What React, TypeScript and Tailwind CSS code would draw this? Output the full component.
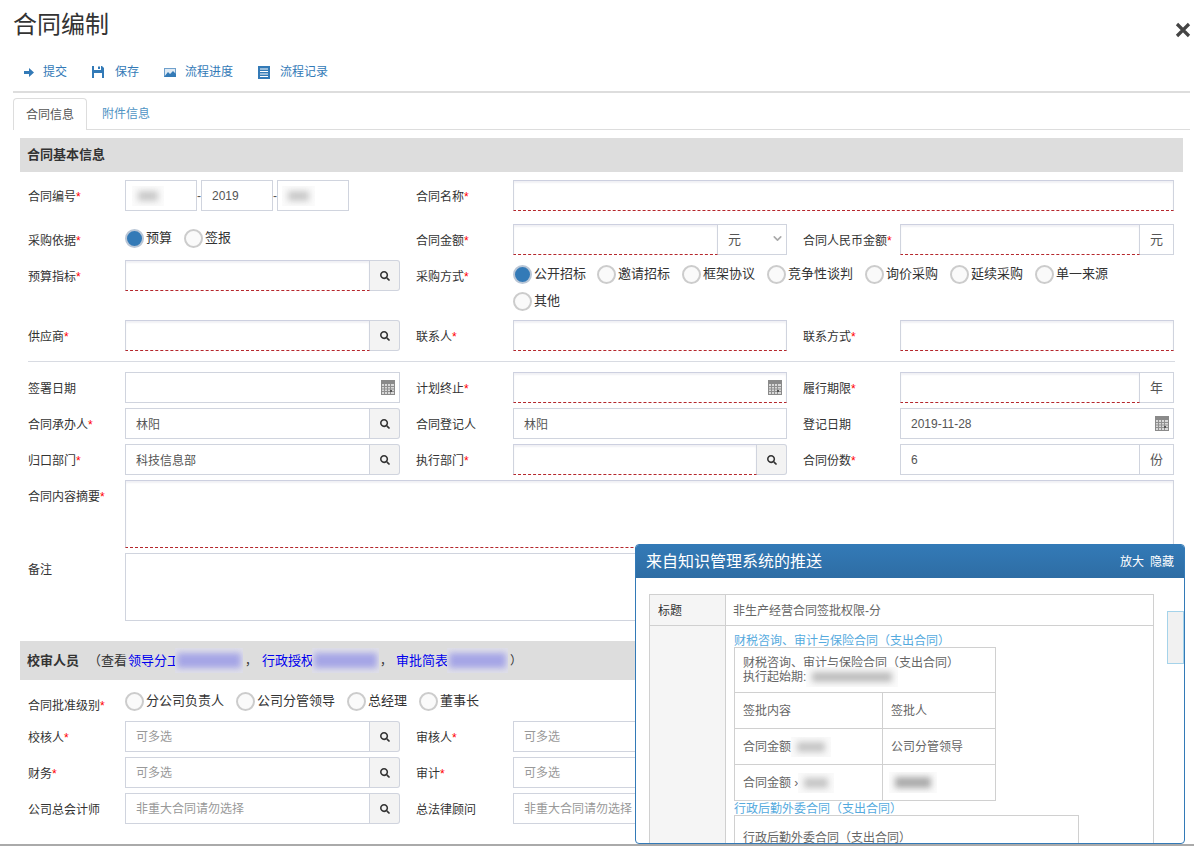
import type { ReactNode } from "react";
import { FaSearch } from "react-icons/fa";
import { ChevronDown } from "lucide-react";

const inputBase =
  "h-full min-w-0 flex-1 border border-[#d0d4de] bg-white px-[10px] text-[12px] text-[#555] outline-none placeholder:text-[#999]";
const requiredInput =
  "border-t-[#cdd0e0] border-b-[#b5272c] [border-bottom-style:dashed] shadow-[inset_0_2px_2px_rgba(60,60,110,0.07)]";

const Blur = ({ w, h, color, bg, pad = 12 }: { w: number; h: number; color: string; bg: string; pad?: number }) => (
  <span
    className="inline-flex shrink-0 items-center justify-center overflow-hidden align-middle"
    style={{ width: w, height: h + 10, background: bg }}
  >
    <span className="blur-[3px]" style={{ width: w - pad, height: h, background: color }} />
  </span>
);

const Label = ({ text, required }: { text: string; required?: boolean }) => (
  <div className="w-[97px] shrink-0 text-[12px] leading-[35px] text-[#333]">
    {text}
    {required && <span className="text-[#f00]">*</span>}
  </div>
);

const Field = ({
  label,
  required,
  wide,
  children,
}: {
  label: string;
  required?: boolean;
  wide?: boolean;
  children: ReactNode;
}) => (
  <div className="flex h-full shrink-0">
    <Label text={label} required={required} />
    <div className={wide ? "flex h-full w-[275px]" : "flex h-full w-[274px]"}>{children}</div>
  </div>
);

const SearchBtn = () => (
  <div className="flex h-full w-[30px] shrink-0 items-center justify-center rounded-r-[3px] border border-l-0 border-[#d0d4de] bg-[#f3f3f3] text-[#333]">
    <FaSearch size={10} />
  </div>
);

const Lookup = ({
  value,
  required,
  placeholder,
}: {
  value?: string;
  required?: boolean;
  placeholder?: string;
}) => (
  <>
    <input
      readOnly
      value={value ?? ""}
      placeholder={placeholder}
      className={`${inputBase} ${required ? requiredInput : ""}`}
    />
    <SearchBtn />
  </>
);

const Plain = ({ required, value }: { required?: boolean; value?: string }) => (
  <input readOnly value={value ?? ""} className={`${inputBase} ${required ? requiredInput : ""}`} />
);

const Addon = ({ text }: { text: string }) => (
  <div className="flex h-full w-[34px] shrink-0 items-center justify-center border border-l-0 border-[#d0d4de] bg-white text-[13px] text-[#555]">
    {text}
  </div>
);

const CalendarIcon = () => (
  <svg width="14" height="15" viewBox="0 0 14 15" className="shrink-0">
    <rect width="14" height="15" fill="#8a8a8a" />
    <rect x="1" y="4" width="12" height="10" fill="#d8d8d8" />
    <path d="M3.5 4v10M6.5 4v10M9.5 4v10M1 6.5h12M1 9h12M1 11.5h12" stroke="#8f8f8f" strokeWidth="1" />
    <rect x="9" y="10" width="2" height="2" fill="#555" />
  </svg>
);

const DateInput = ({ required, value }: { required?: boolean; value?: string }) => (
  <div className="relative flex h-full flex-1">
    <input readOnly value={value ?? ""} className={`${inputBase} ${required ? requiredInput : ""}`} />
    <div className="absolute right-[5px] top-[8px]">
      <CalendarIcon />
    </div>
  </div>
);

const Radio = ({ text, checked }: { text: string; checked?: boolean }) => (
  <div className="flex h-[20px] items-center gap-[2px] text-[13px] text-[#333]">
    <span
      className={
        checked
          ? "h-[19px] w-[19px] rounded-full border-2 border-[#b9c6d6] bg-[#337ab7]"
          : "h-[19px] w-[19px] rounded-full border-2 border-[#ccc] bg-[#fafafa]"
      }
    />
    <span>{text}</span>
  </div>
);

const Toolbar = () => (
  <div className="mt-[20px] flex h-[20px] items-center gap-[25px] pl-[24px] text-[12px] text-[#337ab7]">
    <div className="flex items-center gap-[9px]">
      <svg width="10" height="9" viewBox="0 0 10 9" fill="#337ab7">
        <path d="M0 3h5V0l5 4.5L5 9V6H0z" />
      </svg>
      提交
    </div>
    <div className="flex items-center gap-[11px]">
      <svg width="12" height="12" viewBox="0 0 12 12" fill="#337ab7">
        <path d="M0 0h2v4h7V0h1l2 2v10h-2V7H2v5H0zM6 .5h2V3H6z" />
      </svg>
      保存
    </div>
    <div className="flex items-center gap-[9px]">
      <svg width="12" height="9" viewBox="0 0 12 9">
        <rect width="12" height="9" fill="#6fa0cc" />
        <rect x="1" y="1" width="10" height="7" fill="#dfeaf4" />
        <path d="M0 9l4-5 2 2 3-3 3 3v3z" fill="#337ab7" />
      </svg>
      流程进度
    </div>
    <div className="flex items-center gap-[10px]">
      <svg width="12" height="13" viewBox="0 0 12 13">
        <rect width="12" height="13" fill="#337ab7" />
        <path d="M2 3h8M2 5.5h8M2 8h8M2 10.5h8" stroke="#fff" strokeWidth="1" />
      </svg>
      流程记录
    </div>
  </div>
);

const SectionBar = ({ children, height }: { children: ReactNode; height: string }) => (
  <div className={`-ml-[8px] -mr-[9px] flex items-center bg-[#dddddd] pl-[7px] text-[13px] text-[#333] ${height}`}>
    {children}
  </div>
);

const Link = ({ text, blurW, overlap }: { text: string; blurW: number; overlap: string }) => (
  <span className="inline-flex shrink-0 items-center text-[13px] text-[#0000ee]">
    {text}
    <span className={overlap}>
      <Blur w={blurW} h={15} color="#a5a5e6" bg="#e0e0e8" pad={4} />
    </span>
  </span>
);

const PushPanel = () => (
  <div className="absolute left-[635px] top-[544px] h-[300px] w-[550px] overflow-hidden rounded-[4px] border border-[#337ab7] bg-white">
    <div className="flex h-[33px] items-center justify-between bg-gradient-to-b from-[#337ab7] to-[#2e6da4] pl-[10px] pr-[10px] text-white">
      <span className="text-[16px]">来自知识管理系统的推送</span>
      <div className="flex gap-[6px] text-[12px]">
        <span>放大</span>
        <span>隐藏</span>
      </div>
    </div>
    <div className="ml-[13px] mt-[16px] h-[300px] w-[505px] border border-[#d0d0d0] text-[12px] text-[#666]">
      <div className="flex h-[31px] border-b border-[#d0d0d0]">
        <div className="flex w-[76px] items-center border-r border-[#d0d0d0] bg-[#f5f5f5] pl-[8px] pt-[2px] text-[#333]">
          标题
        </div>
        <div className="flex items-center pl-[7px] pt-[2px]">非生产经营合同签批权限-分</div>
      </div>
      <div className="flex h-[260px]">
        <div className="w-[76px] border-r border-[#d0d0d0] bg-[#f5f5f5]" />
        <div className="pl-[8px]">
          <div className="flex h-[21px] items-end leading-[11px] text-[#55aade]">财税咨询、审计与保险合同（支出合同）</div>
          <div className="w-[262px] border border-[#d0d0d0]">
            <div className="flex h-[45px] flex-col justify-center border-b border-[#d0d0d0] pl-[8px] leading-[14px]">
              <div>财税咨询、审计与保险合同（支出合同）</div>
              <div className="flex h-[14px] items-center">
                执行起始期:
                <Blur w={92} h={10} color="#bdbdbd" bg="#fbfbfb" />
              </div>
            </div>
            <div className="flex h-[36px] border-b border-[#d0d0d0]">
              <div className="flex w-[148px] items-center border-r border-[#d0d0d0] pl-[8px]">签批内容</div>
              <div className="flex items-center pl-[8px]">签批人</div>
            </div>
            <div className="flex h-[36px] border-b border-[#d0d0d0]">
              <div className="flex w-[148px] items-center border-r border-[#d0d0d0] pl-[8px]">
                合同金额
                <Blur w={40} h={10} color="#c4c4c4" bg="#fafafa" />
              </div>
              <div className="flex items-center pl-[8px]">公司分管领导</div>
            </div>
            <div className="flex h-[35px]">
              <div className="flex w-[148px] items-center border-r border-[#d0d0d0] pl-[8px]">
                合同金额 ›
                <Blur w={36} h={10} color="#c4c4c4" bg="#fafafa" />
              </div>
              <div className="flex items-center pl-[6px]">
                <Blur w={48} h={11} color="#aaaaaa" bg="#fbfbfb" />
              </div>
            </div>
          </div>
          <div className="flex h-[14px] items-center pt-px text-[#55aade]">行政后勤外委合同（支出合同）</div>
          <div className="w-[345px] border border-[#d0d0d0] pl-[8px] pt-[13px]">行政后勤外委合同（支出合同）</div>
        </div>
      </div>
    </div>
    <div className="absolute right-0 top-[66px] h-[53px] w-[17px] border border-[#a5d3ea] bg-[#f1f1f1]" />
  </div>
);

const App = () => {
  return (
    <div className="relative h-[846px] w-full overflow-hidden border-b-2 border-[#aaa] bg-white font-['Liberation_Sans','Noto_Sans_CJK_SC',sans-serif]">
      <div className="flex h-[42px] justify-between px-[13px] pt-[9px]">
        <h1 className="text-[24px] font-normal leading-[32px] text-[#333]">合同编制</h1>
        <svg width="18" height="18" viewBox="0 0 18 18" className="-mr-[11px] mt-[12px]">
          <path d="M3 3l12 12M15 3L3 15" stroke="#444" strokeWidth="3.2" />
        </svg>
      </div>
      <Toolbar />
      <div className="mx-[13px] mt-[9px] w-[1177px] border-t-2 border-[#dddddd]" />

      {/* tabs */}
      <div className="mx-[13px] mt-[5px] flex h-[32px] w-[1177px] border-b border-[#dddddd] text-[12px]">
        <div className="flex h-[32px] w-[74px] items-center justify-center rounded-t-[4px] border border-b-0 border-[#dddddd] bg-white text-[#555]">
          合同信息
        </div>
        <div className="flex items-center pl-[15px] text-[#4f94c4]">附件信息</div>
      </div>

      <div className="mt-[8px] pl-[28px] pr-[20px]">
        <SectionBar height="h-[34px]">
          <span className="font-bold">合同基本信息</span>
        </SectionBar>

        {/* 编号 / 名称 */}
        <div className="mt-[8px] flex h-[31px]">
          <div className="flex w-[388px] shrink-0">
            <Label text="合同编号" required />
            <div className="flex h-full items-center text-[12px] text-[#555]">
              <div className="flex h-full w-[72px] items-center overflow-hidden border border-[#d0d4de] pl-[6px]">
                <Blur w={32} h={10} color="#c8c8c8" bg="#fbfbfb" />
              </div>
              <span className="w-[4px] text-center">-</span>
              <div className="flex h-full w-[72px] items-center border border-[#d0d4de] pl-[10px]">2019</div>
              <span className="w-[4px] text-center">-</span>
              <div className="flex h-full w-[72px] items-center overflow-hidden border border-[#d0d4de] pl-[4px]">
                <Blur w={33} h={10} color="#c8c8c8" bg="#fbfbfb" />
              </div>
            </div>
          </div>
          <Label text="合同名称" required />
          <div className="flex h-full w-[661px]">
            <Plain required />
          </div>
        </div>

        {/* 依据 / 金额 */}
        <div className="mt-[13px] flex h-[31px] gap-[16px]">
          <div className="flex w-[372px] shrink-0">
            <Label text="采购依据" required />
            <div className="flex gap-[12px] pt-[4px]">
              <Radio text="预算" checked />
              <Radio text="签报" />
            </div>
          </div>
          <Field label="合同金额" required>
            <Plain required />
            <div className="relative h-full w-[69px] shrink-0">
              <select className="h-full w-full appearance-none border border-l-0 border-[#d0d4de] bg-white pl-[10px] text-[13px] text-[#555]">
                <option>元</option>
              </select>
              <ChevronDown size={13} strokeWidth={3} className="absolute right-[3px] top-[8px] text-[#aaa]" />
            </div>
          </Field>
          <Field label="合同人民币金额" required>
            <Plain required />
            <Addon text="元" />
          </Field>
        </div>

        {/* 指标 / 方式 */}
        <div className="mt-[5px] flex h-[50px] gap-[16px]">
          <div className="h-[31px] shrink-0">
            <Field label="预算指标" required wide>
              <Lookup required />
            </Field>
          </div>
          <div className="flex">
            <Label text="采购方式" required />
            <div className="w-[661px] pt-[4px]">
              <div className="flex gap-x-[12px]">
                <div className="-mr-px">
                  <Radio text="公开招标" checked />
                </div>
                <Radio text="邀请招标" />
                <Radio text="框架协议" />
                <Radio text="竞争性谈判" />
                <Radio text="询价采购" />
                <Radio text="延续采购" />
                <Radio text="单一来源" />
              </div>
              <div className="mt-[7px] flex">
                <Radio text="其他" />
              </div>
            </div>
          </div>
        </div>

        {/* 供应商 */}
        <div className="mt-[10px] flex h-[31px] gap-[16px]">
          <Field label="供应商" required wide>
            <Lookup required />
          </Field>
          <Field label="联系人" required>
            <Plain required />
          </Field>
          <Field label="联系方式" required>
            <Plain required />
          </Field>
        </div>

        <div className="mt-[10px] h-px w-[1147px] bg-[#d8dbe2]" />

        <div className="mt-[10px] flex h-[31px] gap-[16px]">
          <Field label="签署日期" wide>
            <DateInput />
          </Field>
          <Field label="计划终止" required>
            <DateInput required />
          </Field>
          <Field label="履行期限" required>
            <Plain required />
            <Addon text="年" />
          </Field>
        </div>

        <div className="mt-[5px] flex h-[31px] gap-[16px]">
          <Field label="合同承办人" required wide>
            <Lookup value="林阳" />
          </Field>
          <Field label="合同登记人">
            <Plain value="林阳" />
          </Field>
          <Field label="登记日期">
            <DateInput value="2019-11-28" />
          </Field>
        </div>

        <div className="mt-[5px] flex h-[31px] gap-[16px]">
          <Field label="归口部门" required wide>
            <Lookup value="科技信息部" />
          </Field>
          <Field label="执行部门" required>
            <Lookup required />
          </Field>
          <Field label="合同份数" required>
            <Plain value="6" />
            <Addon text="份" />
          </Field>
        </div>

        <div className="mt-[5px] flex h-[68px]">
          <Label text="合同内容摘要" required />
          <div className={`h-full w-[1049px] border border-[#d0d4de] ${requiredInput}`} />
        </div>
        <div className="mt-[5px] flex h-[68px]">
          <Label text="备注" />
          <div className="h-full w-[1049px] border border-[#d0d4de]" />
        </div>

        <div className="mt-[20px]">
          <SectionBar height="h-[39px]">
            <span className="w-[61px] shrink-0 font-bold">校审人员</span>
            <span className="w-[40px] shrink-0 whitespace-nowrap">（查看</span>
            <Link text="领导分工" blurW={68} overlap="-ml-[5px]" />
            <span className="w-[19px] shrink-0 pl-[2px] text-[12px]">，</span>
            <Link text="行政授权" blurW={67} overlap="-ml-[2px]" />
            <span className="w-[17px] shrink-0 pl-[1px] text-[12px]">，</span>
            <Link text="审批简表" blurW={61} overlap="-ml-[1px]" />
            <span className="pl-[2px] text-[12px]">）</span>
          </SectionBar>
        </div>

        <div className="mt-[9px] flex h-[31px]">
          <Label text="合同批准级别" required />
          <div className="flex gap-[12px] pt-[2px]">
            <Radio text="分公司负责人" />
            <Radio text="公司分管领导" />
            <Radio text="总经理" />
            <Radio text="董事长" />
          </div>
        </div>

        <div className="mt-px flex h-[31px] gap-[16px]">
          <Field label="校核人" required wide>
            <Lookup placeholder="可多选" />
          </Field>
          <Field label="审核人" required>
            <Lookup placeholder="可多选" />
          </Field>
        </div>
        <div className="mt-[5px] flex h-[31px] gap-[16px]">
          <Field label="财务" required wide>
            <Lookup placeholder="可多选" />
          </Field>
          <Field label="审计" required>
            <Lookup placeholder="可多选" />
          </Field>
        </div>
        <div className="mt-[5px] flex h-[31px] gap-[16px]">
          <Field label="公司总会计师" wide>
            <Lookup placeholder="非重大合同请勿选择" />
          </Field>
          <Field label="总法律顾问">
            <Lookup placeholder="非重大合同请勿选择" />
          </Field>
        </div>
      </div>

      <PushPanel />
    </div>
  );
};

export default App;
